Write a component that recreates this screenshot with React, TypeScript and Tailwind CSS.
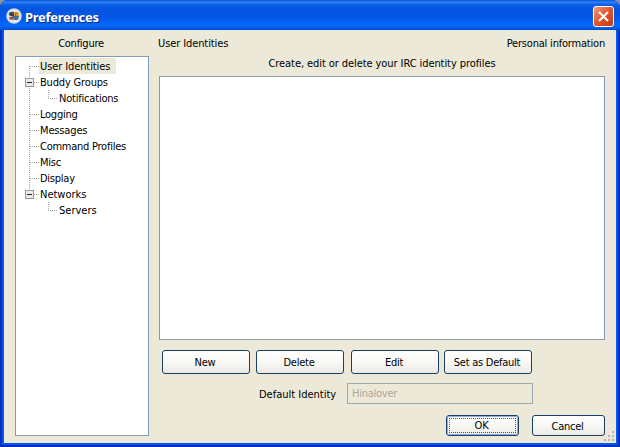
import React from "react";

type Row = { label: string; child?: boolean; box?: boolean; selected?: boolean; tracking?: string };

const rows: Row[] = [
  { label: "User Identities", selected: true, tracking: "tracking-[-0.1px]" },
  { label: "Buddy Groups", box: true, tracking: "tracking-[-0.17px]" },
  { label: "Notifications", child: true, tracking: "tracking-[-0.2px]" },
  { label: "Logging" },
  { label: "Messages", tracking: "tracking-[-0.15px]" },
  { label: "Command Profiles" },
  { label: "Misc" },
  { label: "Display" },
  { label: "Networks", box: true, tracking: "tracking-[0px]" },
  { label: "Servers", child: true, tracking: "tracking-[0px]" },
];

function TreeLines({ row, index }: { row: Row; index: number }) {
  const dots = { stroke: "#a5a5a5", strokeDasharray: "1 1" };
  const last = index >= 8;
  return (
    <svg width={row.child ? 42 : 23} height="16" className="shrink-0" shapeRendering="crispEdges">
      {!(last && row.child) && <path d={index === 0 ? "M13.5 8V16" : last ? "M13.5 0V8" : "M13.5 0V16"} {...dots} />}
      {row.child ? <path d="M32.5 0V8M32 8.5H41" {...dots} /> : <path d="M14 8.5H23" {...dots} />}
      {row.box && (
        <>
          <rect x="9.5" y="4.5" width="8" height="8" fill="#eceae4" stroke="#8f9aa4" />
          <path d="M11 8.5H16" stroke="#222" />
        </>
      )}
    </svg>
  );
}

function XpButton({ label, className, focused }: { label: string; className: string; focused?: boolean }) {
  return (
    <button
      className={`flex shrink-0 items-center justify-center rounded-[3px] border border-[#173f68] bg-linear-to-b from-white via-[#f8f8f5] to-[#eceae4] p-0 ${className}`}
    >
      {focused ? (
        <span className="flex h-full w-full items-center justify-center rounded-[2px] border border-[#8fadea] p-px">
          <span className="flex h-full w-full items-center justify-center border border-dotted border-[#555] pt-px pr-[2px]">{label}</span>
        </span>
      ) : (
        <span className="pt-[2px] pr-[2px]">{label}</span>
      )}
    </button>
  );
}

export default function App() {
  return (
    <div className="flex h-[447px] w-[620px] flex-col overflow-hidden bg-[#8b929e] font-['DejaVu_Sans_Condensed','DejaVu_Sans',sans-serif] text-[11px] leading-4 tracking-[-0.25px] text-black [font-stretch:condensed]">
      <div className="flex h-full flex-col rounded-t-[8px] bg-[#0831d9]">
        <header className="flex h-[30px] shrink-0 items-center rounded-t-[8px] bg-[linear-gradient(180deg,#0a4fd0_0%,#2f83f7_7%,#0b5ee8_16%,#0455e0_30%,#0559e8_60%,#0668fb_82%,#0562f0_92%,#0347c8_100%)] pr-[6px] pl-[6px]">
          <svg width="16" height="16" viewBox="0 0 16 16" className="mt-px">
            <circle cx="8" cy="8" r="7.8" fill="#c3d3ea" />
            <circle cx="8" cy="8" r="6.8" fill="#e2e9f0" />
            <path d="M3 5Q5 3 8 4V8H4Q2 7 3 5Z" fill="#4a5568" />
            <path d="M8 4Q11 3 13 5V8H8Z" fill="#e6a63c" />
            <path d="M3 9L8 8V12Q5 13 3 11Z" fill="#d9803c" />
            <path d="M8 8H13Q13 11 11 12H8Z" fill="#4773ac" />
            <path d="M7 5H5V7H7V10H4" stroke="#28364c" fill="none" />
            <path d="M11.5 5.5H9.5V11H12M9.5 8H12" stroke="#5b5c50" fill="none" strokeWidth="0.8" />
          </svg>
          <h1 className="mt-[3px] ml-[3px] flex-1 font-['Noto_Sans',sans-serif] text-[13px] font-bold tracking-[-0.3px] text-white [text-shadow:1px_1px_1px_#0a2a80]">
            Preferences
          </h1>
          <button aria-label="Close" className="mt-[3px] flex h-[21px] w-[21px] items-center justify-center rounded-[3px] border border-white bg-linear-to-br from-[#ee987b] via-[#e0532c] to-[#c63b12]">
            <svg width="13" height="13" viewBox="0 0 13 13">
              <path d="M2 2L11 11M11 2L2 11" stroke="#fff" strokeWidth="2.1" />
            </svg>
          </button>
        </header>
        <div className="flex min-h-0 flex-1 border-t-0 border-r-[#0030c4] border-b-[#0030c4] border-l-[#0030c4] bg-[#0855ea] border-x-2 border-b-2 px-[2px] pb-[2px]">
          <div className="flex min-w-0 flex-1 bg-[#ece9d8]">
            <aside className="ml-[11px] flex w-[134px] shrink-0 flex-col">
              <h2 className="h-[26px] pt-[6px] pr-[2px] text-center">Configure</h2>
              <ul className="h-[380px] border border-[#7f9db9] bg-white pt-px">
                {rows.map((row, index) => (
                  <li key={row.label} className="flex h-4">
                    <TreeLines row={row} index={index} />
                    <span className={`h-4 pl-px leading-[18px] ${row.selected ? "w-[77px] bg-[#ece9d8]" : ""} ${row.tracking ?? ""}`}>
                      {row.label}
                    </span>
                  </li>
                ))}
              </ul>
            </aside>
            <main className="ml-[10px] flex w-[446px] shrink-0 flex-col">
              <div className="flex h-[25px] justify-between pt-[6px]">
                <span className="-ml-px tracking-[-0.1px]">User Identities</span>
                <span className="tracking-[-0.2px]">Personal information</span>
              </div>
              <p className="h-[21px] pt-px text-center tracking-[-0.08px]">Create, edit or delete your IRC identity profiles</p>
              <div className="h-[264px] border border-[#7f9db9] bg-white" />
              <div className="mt-[10px] flex pl-[3px]">
                <XpButton label="New" className="h-6 w-[88px]" />
                <XpButton label="Delete" className="ml-[6px] h-6 w-[88px]" />
                <XpButton label="Edit" className="ml-[7px] h-6 w-[88px]" />
                <XpButton label="Set as Default" className="ml-[5px] h-6 w-[88px]" />
              </div>
              <div className="mt-[9px] flex items-center pl-[100px]">
                <label className="w-[88px] pt-[2px] tracking-[0px]">Default Identity</label>
                <div className="flex h-[21px] w-[186px] items-center border border-[#9aa9b2] pl-1 text-[#aca899]">Hinalover</div>
              </div>
              <div className="mt-[11px] flex justify-end gap-[13px]">
                <XpButton label="OK" className="h-[21px] w-[73px]" focused />
                <XpButton label="Cancel" className="h-[21px] w-[73px]" />
              </div>
            </main>
            <svg width="11" height="11" className="mb-px -ml-px self-end" shapeRendering="crispEdges">
              <path d="M8 0h2v2h-2zM4 4h2v2h-2zM8 4h2v2h-2zM0 8h2v2h-2zM4 8h2v2h-2zM8 8h2v2h-2z" fill="#b8b4a3" />
            </svg>
          </div>
        </div>
      </div>
    </div>
  );
}
